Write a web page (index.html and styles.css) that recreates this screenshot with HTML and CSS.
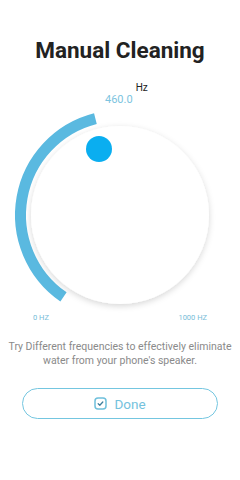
FILE: index.html
```html
<!DOCTYPE html>
<html>
<head>
<meta charset="utf-8">
<link rel="stylesheet" href="styles.css">
</head>
<body>
<main class="screen">
  <h1 class="title">Manual Cleaning</h1>
  <div class="readout">
    <span class="value">460.0</span>
    <span class="unit">Hz</span>
  </div>
  <svg class="dial" width="240" height="207" viewBox="0 0 240 207">
    <defs>
      <filter id="sh" x="-20%" y="-20%" width="140%" height="140%">
        <feDropShadow dx="0" dy="2" stdDeviation="3" flood-color="#000" flood-opacity="0.16"/>
      </filter>
    </defs>
    <path d="M63.5 190.9 A99.5 99.5 0 0 1 95.4 12.6" fill="none" stroke="#5ab9e0" stroke-width="11"/>
    <circle cx="120" cy="109" r="89" fill="#fff" filter="url(#sh)"/>
    <circle cx="99" cy="43" r="13" fill="#0aaef0"/>
  </svg>
  <div class="range">
    <span>0 HZ</span>
    <span>1000 HZ</span>
  </div>
  <p class="hint">Try Different frequencies to effectively eliminate water from your phone's speaker.</p>
  <button class="done">
    <svg class="check" width="13" height="13" viewBox="0 0 13 13">
      <rect x="1" y="1" width="11" height="11" rx="3" fill="none" stroke="#6fc0dc" stroke-width="1.5"/>
      <path d="M4.2 6.8 L5.8 8.2 L8.8 5" fill="none" stroke="#3f7f9c" stroke-width="1.3" stroke-linecap="round" stroke-linejoin="round"/>
    </svg>
    <span>Done</span>
  </button>
</main>
</body>
</html>
```
FILE: styles.css
```css
* { box-sizing: border-box; }
html, body { margin: 0; padding: 0; background: #fff; }
body { font-family: Roboto, "Liberation Sans", sans-serif; }
.screen { width: 240px; display: flex; flex-direction: column; }
.title {
  margin: 0;
  padding-top: 37px;
  font-size: 22.5px;
  line-height: 26px;
  font-weight: 700;
  color: #222;
  text-align: center;
}
.readout {
  margin-top: 19px;
  display: flex;
  align-items: flex-start;
  padding-left: 105px;
  gap: 3px;
}
.value {
  margin-top: 12px;
  font-size: 11px;
  line-height: 12px;
  color: #7cc4e0;
}
.unit {
  font-size: 10px;
  line-height: 12px;
  font-weight: 400;
  color: #222;
}
.dial { display: block; }
.range {
  display: flex;
  justify-content: space-between;
  padding: 0 33px;
  font-size: 7.5px;
  line-height: 10px;
  color: #76bcd8;
}
.hint {
  margin: 17px 0 0;
  padding: 0;
  font-size: 10.5px;
  line-height: 14px;
  color: #8a8a8a;
  text-align: center;
}
.done {
  margin: 20px 22px 0;
  height: 31px;
  border: 1.5px solid #74c6e0;
  border-radius: 16px;
  background: #fff;
  display: flex;
  align-items: center;
  justify-content: center;
  gap: 7px;
  font-family: Roboto, "Liberation Sans", sans-serif;
  font-size: 13.5px;
  color: #74c2dd;
  padding: 0;
}
.check { display: block; }
```
